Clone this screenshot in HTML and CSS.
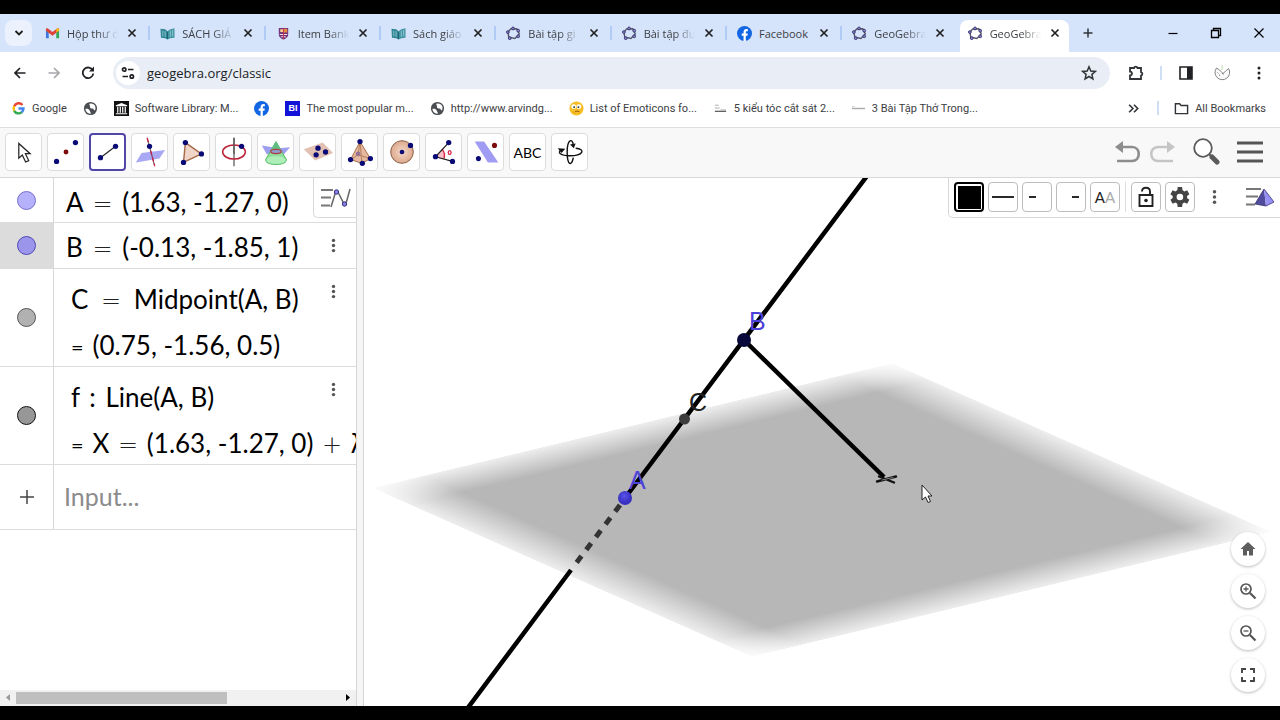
FILE: index.html
```html
<!DOCTYPE html>
<html lang="en">
<head>
<meta charset="utf-8">
<meta name="viewport" content="width=device-width, initial-scale=1">
<title>GeoGebra Classic</title>
<link rel="stylesheet" href="styles.css">
</head>
<body>
<svg class="defs" aria-hidden="true">
  <symbol id="close" viewBox="0 0 14 14"><path d="M3.5 3.5l7 7M10.5 3.5l-7 7" fill="none" stroke="currentColor" stroke-width="1.7"/></symbol>
  <symbol id="book" viewBox="0 0 16 16"><path d="M.5 3l5 .5L8 5.500v9L5.500 13l-4.500-.5z" fill="#2f8796"/><path d="M8 5.500L11 3.500l4.500-1v10l-4.500.5-3 1.500z" fill="#4296a4"/><path d="M3 5v6M5.500 5.500v6M11 5v6.500M13.500 4v7" stroke="#a9d3da" stroke-width=".8"/><path d="M8 6v8" stroke="#1c5c6c"/></symbol>
  <symbol id="ggb" viewBox="0 0 16 16"><path d="M5 3.200L11.500 3 14.200 8.500 9.500 13.300 3 12 2 6.500z" fill="none" stroke="#55556a" stroke-width="1.500"/><g fill="#8b86dc" stroke="#2c2a58" stroke-width=".9"><circle cx="7.500" cy="2.600" r="1.500"/><circle cx="13" cy="5" r="1.500"/><circle cx="13" cy="11" r="1.500"/><circle cx="4" cy="13" r="1.500"/><circle cx="2" cy="6.500" r="1.500"/></g></symbol>
  <symbol id="fb" viewBox="0 0 16 16"><circle cx="8" cy="8" r="8" fill="#1266e3"/><path d="M7 16v-5.500H5V8h2V6.500C7 4.300 8.200 3.300 10 3.300l1.600.2v2h-1C9.600 5.500 9.400 6 9.400 6.700V8h2.100l-.4 2.500H9.400V16z" fill="#fff"/></symbol>
  <symbol id="globe" viewBox="0 0 16 16"><circle cx="8" cy="8" r="7" fill="#4a4d51"/><path d="M2.500 8.500c2-.5 4 0 4.500 1.500s1.500 1.500 1.300 3.500c-3 .5-5.500-2-5.800-5zM7 3c2-1 5 0 6 2.500.5 1.500.5 3-.3 4.500-1.200 0-1.200-2-2.700-2S7 7 7.500 6 6 4.500 7 3z" fill="#fff"/></symbol>
  <symbol id="kebab" viewBox="0 0 8 20"><g fill="currentColor"><circle cx="4" cy="4" r="2"/><circle cx="4" cy="10" r="2"/><circle cx="4" cy="16" r="2"/></g></symbol>
</svg>

<div class="browser">
  <header class="tabstrip">
    <button class="tab-search" aria-label="Search tabs"><svg viewBox="0 0 12 12" width="12" height="12"><path d="M2.500 4l3.500 3.500L9.500 4" fill="none" stroke="#1f1f1f" stroke-width="1.800"/></svg></button>
    <nav class="tabs" aria-label="Tabs">
      <div class="tab"><svg class="fav" viewBox="0 0 16 16"><path d="M1 13V4.500l3 2V13z" fill="#3f78d8"/><path d="M12 13V6.500l3-2V13z" fill="#34a853"/><path d="M1 5V3.500C1 2.500 2.500 2 3.500 2.800L8 6.300l4.500-3.500c1-.8 2.500-.3 2.500.7V5L8 10.300z" fill="#dc4437"/><path d="M12 3.300l.5-.5c1-.8 2.500-.3 2.500.7V5l-3 2.300z" fill="#f5b916"/></svg><a class="title" href="#">Hộp thư đ</a><button class="x" aria-label="Close"><svg><use href="#close"/></svg></button></div>
      <div class="tab"><svg class="fav"><use href="#book"/></svg><a class="title" href="#">SÁCH GIÁ</a><button class="x" aria-label="Close"><svg><use href="#close"/></svg></button></div>
      <div class="tab"><svg class="fav" viewBox="0 0 16 16"><path d="M3 2h10v7c0 3-2.500 4-5 5.500C5.500 13 3 12 3 9z" fill="#70337d"/><path d="M4.500 3.500h3v3h-3z" fill="#f8cf91"/><path d="M8.500 3h3.500v4H8.500z" fill="#e98a43"/><path d="M4 9h8M5.500 11.500h5" stroke="#efdce0" stroke-width="1.200"/><path d="M8 2v12" stroke="#c8334c"/></svg><a class="title" href="#">Item Bank</a><button class="x" aria-label="Close"><svg><use href="#close"/></svg></button></div>
      <div class="tab"><svg class="fav"><use href="#book"/></svg><a class="title" href="#">Sách giáo</a><button class="x" aria-label="Close"><svg><use href="#close"/></svg></button></div>
      <div class="tab"><svg class="fav"><use href="#ggb"/></svg><a class="title" href="#">Bài tập gi</a><button class="x" aria-label="Close"><svg><use href="#close"/></svg></button></div>
      <div class="tab"><svg class="fav"><use href="#ggb"/></svg><a class="title" href="#">Bài tập đư</a><button class="x" aria-label="Close"><svg><use href="#close"/></svg></button></div>
      <div class="tab"><svg class="fav"><use href="#fb"/></svg><a class="title whole" href="#">Facebook</a><button class="x" aria-label="Close"><svg><use href="#close"/></svg></button></div>
      <div class="tab before-active"><svg class="fav"><use href="#ggb"/></svg><a class="title" href="#">GeoGebra</a><button class="x" aria-label="Close"><svg><use href="#close"/></svg></button></div>
      <div class="tab active"><svg class="fav"><use href="#ggb"/></svg><a class="title" href="#" aria-current="page">GeoGebra</a><button class="x" aria-label="Close"><svg><use href="#close"/></svg></button></div>
    </nav>
    <button class="new-tab" aria-label="New tab"><svg viewBox="0 0 12 12" width="12" height="12"><path d="M6 1.500v9M1.500 6h9" stroke="#30343b" stroke-width="1.500"/></svg></button>
    <div class="window-controls">
      <button aria-label="Minimize"><svg viewBox="0 0 12 12" width="12" height="12"><path d="M1.500 6.500h9" stroke="#000" stroke-width="1.200"/></svg></button>
      <button aria-label="Restore"><svg viewBox="0 0 12 12" width="12" height="12"><path d="M1.500 3.500h7v7h-7zM3.500 3.500v-2h7v7h-2" fill="none" stroke="#000" stroke-width="1.300"/></svg></button>
      <button aria-label="Close window"><svg viewBox="0 0 12 12" width="12" height="12"><path d="M1.500 1.500l9 9M10.500 1.500l-9 9" stroke="#000" stroke-width="1.200"/></svg></button>
    </div>
  </header>

  <div class="navbar">
    <button aria-label="Back"><svg viewBox="0 0 16 16"><path d="M13.500 8H3M8 3L3 8l5 5" fill="none" stroke="#202124" stroke-width="1.700"/></svg></button>
    <button aria-label="Forward"><svg viewBox="0 0 16 16"><path d="M2.500 8H13M8 3l5 5-5 5" fill="none" stroke="#a5a7aa" stroke-width="1.700"/></svg></button>
    <button aria-label="Reload"><svg viewBox="0 0 16 16"><path d="M12.800 5.500A5.300 5.300 0 1 0 13.300 8.500" fill="none" stroke="#202124" stroke-width="1.800"/><path d="M9 6.500h5v-5z" fill="#202124"/></svg></button>
    <div class="omnibox">
      <button class="site" aria-label="Site information"><svg viewBox="0 0 16 16" width="15" height="15"><g fill="none" stroke="#202124" stroke-width="1.700"><circle cx="4.200" cy="4.500" r="1.700"/><path d="M8 4.500h5.500M2.500 11.500H8"/><circle cx="11.800" cy="11.500" r="1.700"/></g></svg></button>
      <input type="text" aria-label="Address" value="geogebra.org/classic">
      <button aria-label="Bookmark this tab"><svg viewBox="0 0 16 16"><path d="M8 1.800l1.800 4.200 4.600.4-3.500 3 1 4.500L8 11.500l-3.900 2.400 1-4.500-3.500-3L6.200 6z" fill="none" stroke="#303337" stroke-width="1.500"/></svg></button>
    </div>
    <div class="nav-tools">
      <button aria-label="Extensions"><svg viewBox="0 0 18 18"><path d="M3 4h4a1.800 1.800 0 0 1 3.500 0H14v4a1.800 1.800 0 0 1 0 3.500V15H3v-3.500a2 2 0 0 0 0-4z" fill="none" stroke="#303337" stroke-width="1.800"/></svg></button>
      <span class="rule"></span>
      <button aria-label="Side panel"><svg viewBox="0 0 18 18"><path d="M3 3h12v12H3z" fill="none" stroke="#202124" stroke-width="1.600"/><path d="M10 3h5v12h-5z" fill="#202124"/></svg></button>
      <button aria-label="Profile"><svg viewBox="0 0 18 18"><path d="M9 1v5" stroke="#b5dfac"/><path d="M3.500 4A7.300 7.300 0 1 0 15.500 4.500L10 9.500 6.500 6z" fill="#fafafa" stroke="#777" stroke-width=".9"/><path d="M4.500 8.500l1 1M6 11l1 .5M9 9l1.500 1.500" stroke="#777"/></svg></button>
      <button aria-label="Menu"><svg viewBox="0 0 18 18"><g fill="#202124"><circle cx="10" cy="4" r="1.500"/><circle cx="10" cy="9" r="1.500"/><circle cx="10" cy="14" r="1.500"/></g></svg></button>
    </div>
  </div>

  <nav class="bookmarks" aria-label="Bookmarks">
    <a href="#"><svg viewBox="0 0 16 16"><g fill="none" stroke-width="2.600"><path d="M12.200 4.200A5.300 5.300 0 0 0 3.400 5.500" stroke="#ea4335"/><path d="M3.400 5.500a5.300 5.300 0 0 0 0 5" stroke="#fbbc05"/><path d="M3.400 10.500a5.300 5.300 0 0 0 8 1.500" stroke="#34a853"/><path d="M11.400 12A5.300 5.300 0 0 0 13.300 8H8" stroke="#4285f4"/></g></svg>Google</a>
    <a href="#" aria-label="Website"><svg><use href="#globe"/></svg></a>
    <a href="#"><svg viewBox="0 0 16 16"><path d="M0 0h16v16H0z" fill="#111"/><path d="M8 2l6 2.500v1H2v-1zM2 13h12v1.200H2z" fill="#fff"/><path d="M4 6v6.500M6.700 6v6.500M9.300 6v6.500M12 6v6.500" stroke="#fff" stroke-width="1.300"/></svg>Software Library: M...</a>
    <a href="#" aria-label="Facebook"><svg><use href="#fb"/></svg></a>
    <a href="#"><span class="bi">BI</span>The most popular m...</a>
    <a href="#"><svg><use href="#globe"/></svg>http://www.arvindg...</a>
    <a href="#"><svg viewBox="0 0 16 16"><circle cx="8" cy="8" r="7.500" fill="#f7bd24"/><circle cx="5" cy="6" r="2.600" fill="#fff"/><circle cx="10.500" cy="6" r="2.600" fill="#fff"/><circle cx="5.500" cy="6.500" r="1" fill="#222"/><circle cx="10" cy="6.500" r="1" fill="#222"/><path d="M6 12c1.500-1.500 3-1.500 5-.5" fill="none" stroke="#82500d"/></svg>List of Emoticons fo...</a>
    <a href="#"><svg viewBox="0 0 16 16"><path d="M2 4.500h4M2 7.500h5" stroke="#aaa"/><path d="M2 11h12" stroke="#555" stroke-width="1.300"/><path d="M8 9.500h6" stroke="#aaa"/></svg>5 kiểu tóc cắt sát 2...</a>
    <a href="#"><svg viewBox="0 0 16 16"><path d="M1 8h14" stroke="#aaa" stroke-width="1.500"/><path d="M1 6h3" stroke="#ccc"/></svg>3 Bài Tập Thở Trong...</a>
    <div class="bookmarks-end">
      <button aria-label="More bookmarks"><svg viewBox="0 0 14 14"><path d="M2 3.500L5.500 7 2 10.500M6.500 3.500L10 7l-3.500 3.500" fill="none" stroke="#303337" stroke-width="1.500"/></svg></button>
      <span class="rule"></span>
      <a href="#"><svg viewBox="0 0 16 16"><path d="M1.500 3h4.500l1.500 1.800h7v8.700h-13z" fill="none" stroke="#303337" stroke-width="1.500"/></svg>All Bookmarks</a>
    </div>
  </nav>

  <div class="toolbar">
    <div class="tools">
      <button aria-label="Move"><svg viewBox="0 0 36 36"><path d="M12.500 9v15.500l3.700-3.400 3.500 7.500 3.300-1.500-3.500-7.300h5z" fill="#fff" stroke="#222" stroke-width="1.300"/></svg></button>
      <button aria-label="Point"><svg viewBox="0 0 36 36"><g fill="#0b0b78"><circle cx="8" cy="28" r="2.800"/><circle cx="28" cy="8" r="2.800"/></g><circle cx="18" cy="18" r="2.600" fill="#7d0c0c"/></svg></button>
      <button class="selected" aria-label="Segment" aria-pressed="true"><svg viewBox="0 0 36 36"><path d="M10 24L26 12" stroke="#222" stroke-width="1.300"/><g fill="#0b0b78"><circle cx="10" cy="24" r="2.800"/><circle cx="26" cy="12" r="2.800"/></g></svg></button>
      <button aria-label="Perpendicular line"><svg viewBox="0 0 36 36"><path d="M3 29l6-10 25-3-6 9z" fill="#a8a8f5"/><path d="M15 3l8 30" stroke="#444" stroke-width="1"/><path d="M15 3l8 30" stroke="#cf2146" stroke-width="1.400" stroke-dasharray="5 2"/><circle cx="17.500" cy="12" r="2.800" fill="#0b0b78"/></svg></button>
      <button aria-label="Polygon"><svg viewBox="0 0 36 36"><path d="M11 8l17 12-19 9z" fill="#efd6c8" stroke="#a6694a" stroke-width="1.500"/><g fill="#0b0b78"><circle cx="11" cy="8" r="2.800"/><circle cx="28" cy="20" r="2.800"/><circle cx="9" cy="29" r="2.800"/></g></svg></button>
      <button aria-label="Circle with axis"><svg viewBox="0 0 36 36"><path d="M18 3v30" stroke="#555" stroke-width="1.300"/><ellipse cx="18" cy="18" rx="12" ry="7.500" fill="none" stroke="#bd263a" stroke-width="1.600"/><path d="M18 3v17" stroke="#555" stroke-width="1.300"/><circle cx="26" cy="12" r="2.800" fill="#0b0b78"/></svg></button>
      <button aria-label="Intersect two surfaces"><svg viewBox="0 0 36 36"><path d="M3 11l18 3 12-1-8 9-17-2z" fill="#9e9ef0"/><path d="M18 7L7 26c-1 7 23 7 22 0z" fill="#8fe09d" stroke="#54b765"/><path d="M15 12l-3 6c0 3 12 3 12 0l-3-6-3-5z" fill="#62bd83"/><ellipse cx="18" cy="26.500" rx="10" ry="4" fill="#aeefb9"/><ellipse cx="18" cy="17.500" rx="5.500" ry="2.200" fill="#8a9fd0" stroke="#b73945" stroke-width="1.300"/></svg></button>
      <button aria-label="Plane through 3 points"><svg viewBox="0 0 36 36"><path d="M3 15l20-7 11 11-19 8z" fill="#e2c0b2"/><g fill="#0b0b78"><circle cx="18" cy="14" r="2.800"/><circle cx="26" cy="18" r="2.800"/><circle cx="16" cy="21" r="2.800"/></g></svg></button>
      <button aria-label="Pyramid"><svg viewBox="0 0 36 36"><path d="M18 7L8 26l12 4 9-5z" fill="#e4b99f" stroke="#a76742"/><path d="M18 7l2 23M18 7l-2 14-8 5M16 21l13 4" fill="none" stroke="#b77b58"/><g fill="#0b0b78"><circle cx="18" cy="7" r="2.800"/><circle cx="8" cy="26" r="2.800"/><circle cx="20.500" cy="30" r="2.800"/><circle cx="29" cy="25" r="2.800"/></g><circle cx="16" cy="20" r="2.500" fill="#987194"/></svg></button>
      <button aria-label="Sphere"><svg viewBox="0 0 36 36"><defs><radialGradient id="ball"><stop offset="0" stop-color="#f6d8c7"/><stop offset="1" stop-color="#dba98d"/></radialGradient></defs><circle cx="18" cy="18" r="12" fill="url(#ball)" stroke="#875a43"/><g fill="#0b0b78"><circle cx="18" cy="18" r="2.500"/><circle cx="27" cy="11" r="2.800"/></g></svg></button>
      <button aria-label="Angle"><svg viewBox="0 0 36 36"><path d="M9 23l7-8a12 12 0 0 1 2 11z" fill="#f8bfca"/><path d="M16 15a11 11 0 0 1 2 10" fill="none" stroke="#d92248" stroke-width="1.500"/><path d="M23 8L9 23l18 5" fill="none" stroke="#222" stroke-width="1.300"/><ellipse cx="24" cy="18.500" rx="1.500" ry="2" fill="none" stroke="#d92248" stroke-width="1.400"/><g fill="#0b0b78"><circle cx="23" cy="8" r="2.800"/><circle cx="9" cy="23" r="2.800"/><circle cx="27" cy="28" r="2.800"/></g></svg></button>
      <button aria-label="Reflect about plane"><svg viewBox="0 0 36 36"><path d="M6 7h10l15 22H20z" fill="#a19cf3"/><circle cx="10" cy="25" r="2.700" fill="#0b0b78"/><circle cx="27" cy="11" r="2.700" fill="#7d0c0c"/></svg></button>
      <button class="text-tool">ABC</button>
      <button aria-label="Rotate 3D graphics view"><svg viewBox="0 0 36 36"><g fill="none" stroke="#111" stroke-width="1.500"><path d="M21.500 11C21 3 15 4 15 18c0 15 5 15 6.500 6M9 15.500c-5 3-1 6.500 9 6.500 14 0 17-7 6-8"/></g><path d="M24 9l-2 5-4-4zM5 14l8 .5-4 4.500z" fill="#111"/></svg></button>
    </div>
    <div class="actions">
      <button aria-label="Undo"><svg viewBox="0 0 28 28" width="28" height="28"><path d="M7 9h11c9 0 9 14 0 14H3" fill="none" stroke="#8d8d8d" stroke-width="2.600"/><path d="M1 9l8-6v12z" fill="#8d8d8d"/></svg></button>
      <button aria-label="Redo"><svg viewBox="0 0 28 28" width="28" height="28"><path d="M21 9H10c-9 0-9 14 0 14h15" fill="none" stroke="#c5c5c5" stroke-width="2.600"/><path d="M27 9l-8-6v12z" fill="#c5c5c5"/></svg></button>
      <button class="search" aria-label="Search"><svg viewBox="0 0 28 28" width="28" height="28"><circle cx="11" cy="10" r="8.800" fill="#fff" stroke="#5a5a5a" stroke-width="1.800"/><path d="M17 16l3 3" stroke="#5a5a5a" stroke-width="2"/><path d="M20 19l5 5" stroke="#5a5a5a" stroke-width="5" stroke-linecap="round"/></svg></button>
      <button class="menu" aria-label="Main menu"><svg viewBox="0 0 28 28" width="28" height="28"><path d="M1 5h26M1 14h26M1 23h26" stroke="#555" stroke-width="2.800"/></svg></button>
    </div>
  </div>

  <main class="workspace">
    <section class="algebra" aria-label="Algebra">
      <div class="rows">
        <div class="row single"><div class="marble"><button class="dot blue" aria-label="Show or hide A"></button></div><div class="expr"><p>A <span class="rel">=</span> (1.63, -1.27, 0)</p></div></div>
        <div class="row single"><div class="marble chosen"><button class="dot indigo" aria-label="Show or hide B"></button></div><div class="expr"><p>B <span class="rel">=</span> (-0.13, -1.85, 1)</p></div><button class="more" aria-label="More"><svg><use href="#kebab"/></svg></button></div>
        <div class="row double"><div class="marble"><button class="dot grey" aria-label="Show or hide C"></button></div><div class="expr"><p>C <span class="rel wide">=</span> Midpoint(A, B)</p><p><span class="result">=</span>(0.75, -1.56, 0.5)</p></div><button class="more" aria-label="More"><svg><use href="#kebab"/></svg></button></div>
        <div class="row double"><div class="marble"><button class="dot dark" aria-label="Show or hide f"></button></div><div class="expr"><p>f <span class="colon">:</span> Line(A, B)</p><p><span class="result">=</span>X <span class="rel tight">=</span> (1.63, -1.27, 0) <span class="rel tight">+</span> λ</p></div><button class="more" aria-label="More"><svg><use href="#kebab"/></svg></button></div>
        <div class="row entry"><div class="marble"><button class="add" aria-label="Add item"><svg viewBox="0 0 14 14" width="14" height="14"><path d="M7 0v14M0 7h14" stroke="#444" stroke-width="1.500"/></svg></button></div><input type="text" aria-label="Input" placeholder="Input..."></div>
      </div>
      <button class="algebra-style" aria-label="Algebra style bar"><svg viewBox="0 0 32 24" width="32" height="24"><path d="M2 4h12M2 11.500h10M2 19.500h9" stroke="#777" stroke-width="1.800"/><path d="M12 21L16 8c1-3 3-3 4 0l4 8c1 3 3 2 4-2l3-11" fill="none" stroke="#666" stroke-width="1.500"/><g fill="#8781e8" stroke="#333078"><circle cx="17.500" cy="6" r="2.200"/><circle cx="25.500" cy="18" r="2.200"/></g></svg></button>
      <div class="scrollbar">
        <button aria-label="Scroll left"><svg viewBox="0 0 8 10" width="8" height="10"><path d="M6 1v7L2 4.500z" fill="#999"/></svg></button>
        <div class="track"><div class="thumb"></div></div>
        <button aria-label="Scroll right"><svg viewBox="0 0 8 10" width="8" height="10"><path d="M2 1v7l4-3.500z" fill="#000"/></svg></button>
      </div>
    </section>
    <div class="splitter"></div>
    <section class="view" aria-label="3D graphics">
      <svg class="scene" viewBox="364 178 916 528" preserveAspectRatio="xMidYMid slice">
        <defs>
          <linearGradient id="fadeU"><stop offset="0" stop-color="#000" stop-opacity=".24"/><stop offset=".1" stop-color="#000"/><stop offset=".9" stop-color="#000"/><stop offset="1" stop-color="#000" stop-opacity=".24"/></linearGradient>
          <linearGradient id="fadeV" x2="0" y2="1"><stop offset="0" stop-color="#fff" stop-opacity=".24"/><stop offset=".1" stop-color="#fff"/><stop offset=".9" stop-color="#fff"/><stop offset="1" stop-color="#fff" stop-opacity=".24"/></linearGradient>
          <mask id="edge" maskUnits="userSpaceOnUse" x="-1" y="-1" width="2" height="2"><rect x="-1" y="-1" width="2" height="2" fill="url(#fadeV)"/></mask>
          <radialGradient id="blueBall" cx=".45" cy=".35"><stop offset="0" stop-color="#5a52ea"/><stop offset="1" stop-color="#3730c0"/></radialGradient>
        </defs>
        <g transform="matrix(260 -62.500 190 84.500 822 510)"><rect x="-1" y="-1" width="2" height="2" fill="url(#fadeU)" opacity=".28" mask="url(#edge)"/></g>
        <g stroke="#000" stroke-width="4.500" fill="none">
          <path d="M867 176L625 498M571 570L467 709"/>
          <path d="M744 340L884 477"/>
          <path d="M620 505L574 566" stroke="#333" stroke-width="5" stroke-dasharray="8 8"/>
        </g>
        <g fill="none" stroke-linecap="round"><path d="M877 481.500L896 476.500M879 476.500L894 482.500" stroke="#111" stroke-width="2.400"/><path d="M882 480L893 477.500" stroke="#999" stroke-width=".8"/></g>
        <circle cx="744" cy="340" r="7" fill="#08083a"/>
        <circle cx="684.500" cy="419" r="5.500" fill="#3c3c3c"/>
        <circle cx="625" cy="498" r="7" fill="url(#blueBall)"/>
        <g class="labels"><text x="749" y="330" fill="#4d42d8">B</text><text x="689" y="411" fill="#222">C</text><text x="629" y="489" fill="#4d42d8">A</text></g>
        <path d="M922 485v15l3.500-3 2.500 5.500 2.500-1-2.500-5.500h4z" fill="#fff" stroke="#222" stroke-width="1"/>
      </svg>

      <div class="stylebar">
        <button class="color" aria-label="Color"><span></span></button>
        <button aria-label="Line style"><svg viewBox="0 0 28 28"><path d="M3 14h22" stroke="#111" stroke-width="1.800"/></svg></button>
        <button aria-label="Segment start"><svg viewBox="0 0 28 28"><path d="M6 14h7" stroke="#111" stroke-width="1.800"/></svg></button>
        <button aria-label="Segment end"><svg viewBox="0 0 28 28"><path d="M15 14h7" stroke="#111" stroke-width="1.800"/></svg></button>
        <button class="label-style" aria-label="Label style"><span>A</span><span class="pale">A</span></button>
        <span class="sep"></span>
        <button aria-label="Fix object"><svg viewBox="0 0 28 28"><path d="M7.500 12h13v11h-13zM10 8.500c0-5 8-5 8 0V12" fill="none" stroke="#222" stroke-width="1.900"/><circle cx="14" cy="17.500" r="1.800" fill="#222"/></svg></button>
        <button aria-label="Settings"><svg viewBox="3 2 20 20" width="22" height="22"><path fill="#444" fill-rule="evenodd" d="M19.400 13a7.500 7.500 0 0 0 0-2l2.100-1.600-2-3.500-2.500 1a7 7 0 0 0-1.700-1L14.900 3h-4l-.4 2.900a7 7 0 0 0-1.700 1l-2.500-1-2 3.500L6.400 11a7.500 7.500 0 0 0 0 2l-2.100 1.600 2 3.500 2.500-1a7 7 0 0 0 1.700 1l.4 2.900h4l.4-2.900a7 7 0 0 0 1.700-1l2.500 1 2-3.500zM12.900 15a3 3 0 1 1 0-6 3 3 0 0 1 0 6z"/></svg></button>
        <button class="plain" aria-label="More options"><svg viewBox="0 0 8 20" width="7" height="18"><use href="#kebab"/></svg></button>
        <button class="plain view-menu" aria-label="3D view style bar"><svg viewBox="0 0 30 22" width="30" height="22"><path d="M1 3h15M1 10.500h12M1 18.500h9" stroke="#777" stroke-width="1.800"/><path d="M19 3L10 18l11 2z" fill="#514b9c"/><path d="M19 3l2 17 8-4z" fill="#9790f5"/><path d="M19 3L10 18l11 2 8-4z" fill="none" stroke="#37336d" stroke-width=".8"/></svg></button>
      </div>

      <div class="zoom">
        <button aria-label="Standard view"><svg viewBox="0 0 18 18"><path d="M9 2L1.500 9H4v6.500h4V11h2v4.500h4V9h2.500z" fill="#5e5e5e"/></svg></button>
        <button aria-label="Zoom in"><svg viewBox="0 0 18 18"><circle cx="7" cy="7" r="5" fill="none" stroke="#555" stroke-width="1.700"/><path d="M11 11l5.500 5.500" stroke="#555" stroke-width="2.200"/><path d="M7 4.500v5M4.500 7h5" stroke="#555" stroke-width="1.300"/></svg></button>
        <button aria-label="Zoom out"><svg viewBox="0 0 18 18"><circle cx="7" cy="7" r="5" fill="none" stroke="#555" stroke-width="1.700"/><path d="M11 11l5.500 5.500" stroke="#555" stroke-width="2.200"/><path d="M4.500 7h5" stroke="#555" stroke-width="1.300"/></svg></button>
        <button aria-label="Fullscreen"><svg viewBox="0 0 18 18"><path d="M3 7V3h4M11 3h4v4M15 11v4h-4M7 15H3v-4" fill="none" stroke="#444" stroke-width="1.900"/></svg></button>
      </div>
    </section>
  </main>
</div>
</body>
</html>
```
FILE: styles.css
```css
* { box-sizing: border-box; }
body {
  margin: 0;
  min-height: 100vh;
  padding: 14px 0;
  background: #000;
  display: flex;
  font-family: "Open Sans", "Noto Sans", sans-serif;
  font-size: 12px;
  color: #3c4043;
}
button { border: 0; padding: 0; background: none; font: inherit; color: inherit; display: flex; align-items: center; justify-content: center; }
a { color: inherit; text-decoration: none; }
svg { display: block; flex: none; }
p { margin: 0; }
.defs { position: absolute; width: 0; height: 0; }
.browser { flex: 1; min-width: 0; display: flex; flex-direction: column; background: #fff; }

/* Tab strip */
.tabstrip { display: flex; height: 38px; padding-left: 5px; background: #d5e3fb; }
.tab-search { width: 27px; height: 26px; margin: 6px 3px 0 0; border-radius: 8px; background: #ebf2fe; }
.tabs { flex: 1; min-width: 0; display: flex; }
.tab { position: relative; flex: 1 1 0; min-width: 0; display: flex; align-items: center; height: 38px; padding-left: 10px; font-size: 11px; }
.tab::after { content: ""; position: absolute; right: 0; top: 12px; width: 2px; height: 14px; background: #b0cbf6; }
.tab.before-active::after, .tab.active::after { display: none; }
.fav { width: 15px; height: 15px; margin-right: 7px; }
.title { flex: 1; min-width: 0; overflow: hidden; white-space: nowrap; -webkit-mask-image: linear-gradient(90deg, #000 60%, transparent); mask-image: linear-gradient(90deg, #000 60%, transparent); }
.title.whole { -webkit-mask-image: none; mask-image: none; }
.x { width: 14px; height: 14px; margin: 0 11px 0 7px; color: #222; }
.x svg { width: 14px; height: 14px; }
.tab.active::before { content: ""; position: absolute; z-index: 0; inset: 6px 4px 0 2px; border-radius: 8px 8px 0 0; background: #fff; }
.tab.active > * { z-index: 1; }
.new-tab { width: 30px; }
.window-controls { display: flex; margin-left: 48px; }
.window-controls button { width: 43px; }

/* Navigation */
.navbar { display: flex; align-items: center; height: 42px; padding-left: 3px; }
.navbar svg { width: 16px; height: 16px; }
.navbar > button { width: 34px; height: 30px; }
.omnibox { flex: 1; display: flex; align-items: center; height: 32px; margin-left: 8px; padding: 0 13px 0 3px; border-radius: 16px; background: #e9eef6; }
.omnibox .site { width: 24px; height: 24px; border-radius: 12px; background: #fff; }
.omnibox input { flex: 1; min-width: 0; border: 0; padding: 0; margin-left: 7px; background: none; font: 13px "Open Sans", sans-serif; color: #202124; outline: 0; }
.nav-tools { display: flex; align-items: center; padding: 0 12px 0 16px; }
.nav-tools button { width: 20px; height: 30px; }
.nav-tools svg { width: 18px; height: 18px; }
.nav-tools .rule { margin: 0 14px; }
.nav-tools button + button { margin-left: 16px; }
.rule { width: 2px; height: 14px; background: #cfdff3; }

.bookmarks { display: flex; align-items: center; height: 28px; padding: 0 14px 0 11px; gap: 16px; margin-bottom: 5px; font-family: Roboto, "Open Sans", sans-serif; font-size: 11px; white-space: nowrap; }
.bookmarks a { display: flex; align-items: center; gap: 6px; }
.bookmarks svg { width: 15px; height: 15px; }
.bi { width: 15px; height: 15px; background: #1212d8; color: #fff; font: bold 9px/15px "Liberation Sans", sans-serif; text-align: center; }
.bookmarks-end { display: flex; align-items: center; gap: 15px; margin-left: auto; }

/* GeoGebra toolbar */
.toolbar { display: flex; justify-content: space-between; align-items: center; height: 51px; padding: 0 16px 1px 5px; background: #f8f8f8; border-top: 1px solid #dedede; border-bottom: 1px solid #d8d8d8; }
.tools { display: flex; gap: 5px; }
.tools button { width: 37px; height: 38px; border: 1px solid #dcdcdc; border-radius: 4px; background: #fff; }
.tools svg { width: 34px; height: 34px; }
.tools .selected { border: 2px solid #5145a8; }
.tools .text-tool { font: 14px Lato, sans-serif; color: #000; }
.actions { display: flex; align-items: center; gap: 6px; }
.actions .search { margin-left: 10px; }
.actions .menu { margin-left: 10px; }

/* Workspace */
.workspace { flex: 1; min-height: 0; display: flex; }
.algebra { position: relative; flex: 0 0 356px; min-width: 0; display: flex; flex-direction: column; background: #fff; }
.rows { flex: 1; overflow: hidden; }
.row { position: relative; display: flex; border-bottom: 1px solid #dcdcdc; color: #000; }
.marble { flex: 0 0 54px; display: flex; align-items: center; justify-content: center; border-right: 1px solid #d8d8d8; }
.marble.chosen { background: #dcdcdc; }
.dot { width: 19px; height: 19px; border: 1px solid #333; border-radius: 50%; }
.dot.blue { background: #b6b1fb; border-color: #756fce; }
.dot.indigo { background: #9c95ec; border-color: #5048b8; }
.dot.grey { background: #b1b1b1; border-color: #555; }
.dot.dark { background: #979797; border-color: #111; }
.expr { flex: 1; min-width: 0; overflow: hidden; white-space: nowrap; font: 26px/46px Lato, sans-serif; padding-left: 12px; }
.expr p { height: 46px; }
.rel { margin: 0 3px; font: 200 24px/1 "DejaVu Sans", sans-serif; color: #222; }
.rel.wide { margin: 0 6px; }
.rel.tight { margin: 0 2px; }
.colon { margin: 0 3px; }
.result { margin-right: 9px; font: 15px/1 "DejaVu Sans", sans-serif; vertical-align: 2px; }
.single { height: 46px; }
.single .expr { padding-top: 1px; }
.single:first-child { height: 45px; }
.double { height: 98px; }
.double .expr { padding: 7px 0 0 17px; }
.more { position: absolute; right: 18px; top: 14px; width: 9px; height: 17px; color: #555; }
.more svg { width: 7px; height: 17px; }
.entry { height: 65px; }
.entry input { flex: 1; min-width: 0; border: 0; padding: 0 0 3px 10px; background: none; font: 25px Lato, sans-serif; outline: 0; }
.entry input::placeholder { color: #8c8c8c; opacity: 1; }
.algebra-style { position: absolute; right: 0; top: 0; width: 43px; height: 40px; background: #fff; border: 1px solid #d8d8d8; border-width: 0 0 1px 1px; border-radius: 0 0 0 5px; }
.scrollbar { display: flex; height: 16px; background: #f1f1f1; }
.scrollbar button { width: 16px; }
.track { flex: 1; padding: 2px 0; }
.thumb { width: 65%; height: 12px; background: #bfbfbf; }
.splitter { flex: 0 0 8px; background: #f6f6f6; border: 1px solid #d4d4d4; border-width: 0 1px; }
.view { position: relative; flex: 1; min-width: 0; overflow: hidden; }
.scene { position: absolute; inset: 0; width: 100%; height: 100%; }
.labels { font: 25px "Liberation Sans", sans-serif; }

.stylebar { position: absolute; top: 0; right: 0; display: flex; align-items: center; gap: 4px; height: 40px; padding: 0 5px 1px; background: #fff; border: 1px solid #d8d8d8; border-width: 0 0 1px 1px; border-radius: 0 0 0 5px; }
.stylebar button { width: 30px; height: 30px; border: 1px solid #bdbdbd; border-radius: 4px; }
.stylebar .color { border: 2px solid #000; }
.color span { width: 23px; height: 23px; background: #000; }
.stylebar .label-style { font: 15px Lato, sans-serif; color: #222; }
.label-style .pale { color: #aaa; }
.sep { width: 1px; height: 30px; margin: 0 1px; background: #ddd; }
.stylebar .plain { border: 0; color: #555; }
.stylebar .view-menu { margin-left: 12px; }

.zoom { position: absolute; right: 15px; bottom: 14px; display: flex; flex-direction: column; gap: 8px; }
.zoom button { width: 34px; height: 34px; border-radius: 50%; background: #fff; box-shadow: 0 1px 3px #0004; }
.zoom svg { width: 18px; height: 18px; }
```
